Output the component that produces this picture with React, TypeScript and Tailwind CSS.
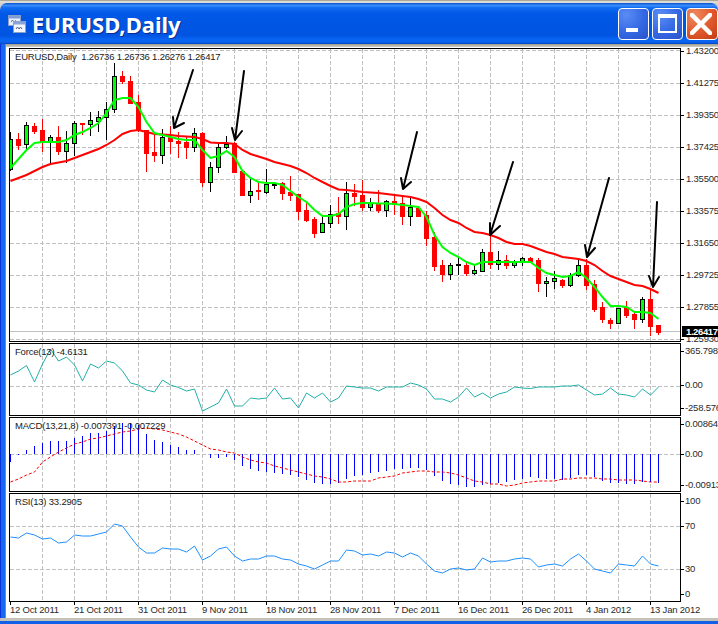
import React from "react";

type C = [number, number, number, number, number];
const candles: C[] = [
  [132,139,169,170,1],[133,139,145,149,0],[122,125,144,148,1],[123,126,131,133,0],[119,130,142,151,0],[135,137,141,163,1],[126,137,151,154,0],[131,143,151,162,1],
  [121,123,143,155,1],[123,123,124,134,0],[112,120,124,135,1],[111,117,121,131,1],[102,109,117,139,1],[63,76,109,112,1],[71,76,81,83,0],[76,81,103,103,0],
  [95,102,130,131,0],[130,130,153,171,0],[133,152,155,161,0],[129,137,155,163,1],[126,137,141,153,0],[132,141,143,157,0],[137,142,147,158,0],[128,133,147,151,1],
  [132,133,182,186,0],[162,167,182,191,1],[142,147,167,172,1],[136,144,147,148,1],[142,143,172,172,0],[170,171,195,195,0],[178,191,195,202,1],[182,190,191,199,0],
  [169,184,192,193,1],[182,184,185,188,1],[182,183,193,199,0],[176,192,195,200,0],[194,194,211,219,0],[202,210,220,221,0],[217,219,233,237,0],[216,223,232,232,1],
  [205,214,223,227,1],[197,213,216,223,0],[182,193,216,229,1],[184,193,196,205,0],[180,195,207,210,0],[198,203,207,210,1],[190,203,210,212,0],[200,201,210,216,1],
  [195,201,204,214,0],[195,203,216,224,0],[198,207,216,225,1],[208,208,216,216,0],[211,215,238,245,0],[232,237,266,270,0],[260,265,274,281,0],[263,265,274,279,1],
  [257,264,265,274,1],[263,265,273,275,0],[265,270,273,274,1],[249,252,271,271,1],[235,252,264,268,0],[251,260,264,269,1],[255,260,265,268,0],[260,261,265,267,1],
  [257,258,261,265,1],[257,258,261,262,0],[258,260,283,291,0],[277,281,283,296,1],[271,278,281,288,1],[279,280,285,287,0],[273,275,285,286,1],[258,265,275,276,1],
  [259,265,285,289,0],[280,284,309,311,0],[302,307,319,322,0],[318,320,323,328,0],[308,308,323,323,1],[301,307,315,317,0],[311,314,319,328,0],[297,299,319,322,1],
  [289,299,326,335,0],[325,325,332,334,0],
];
const redMA = [181,178,175,171,167,164,162.5,161,158,155,152,149,145,140,134,131,130,132,134,134.5,135,136,136.5,137,139,142.5,143,143,144,150,154,156.5,159,162,164,166,169,173,178,182,186,189.5,190,191,192,192.5,193,194,195,196,197,199,202,208,215,220,223,228,232,233,235,238,242,244,244,246,249,252,254,257,258,259,261,265,271,276,279,282,285,286,289,293];
const greenMA = [168,159,150,143,142,142,142,140,135,132,128,123,113,100,98,98,107,122,133,135,137,139,140,140,150,158,156,151,157,171,178,182,183,183,185,191,197,202,210,216,216,214,207,204,203,203,203.5,203.5,204,205,206,207,217,235,247,253,257,262,265,262,262,262,262,262,262,262,268,273,275,277,276,272,278,287,297,306,306,307,312,312,313,319];
const force = [375,371,365.5,382,364,349,361,357,365,381,364,368,361,363,371,383,385,390,392,380,385,387.5,391,389,411,407,403,389,406,406,398,399,398,388,399,398,408,393,398,393,402,398,386,387,388,388,391,387,387,387,383,385,389,399,399,402,397,388,397,393,398,394,392,387,388,388.5,387,387,387,386,386,385,390,395,394,388,394,395,397,389,395,387];
const macdHist = [462,455,450,446,443,441,441,441,438,436,433,433,431,426,423,423,425,434,440,442,445,447,450,450,454,458,458,457,460,466,469,471,472,473,474,475,477,480,483,484,484,483,479,476,475,473,472,471,469,469,468,468,470,476,481,484,485,487,487,485,484,483,482,480,479,477,478,479,479,480,478,475,475,477,481,483,483,484,484,482,482,483];
const macdSig = [482,479,475,472,462,457,452,448,444,442,439,438,436,434,432,431,429,428,429,430,432,434,437,441,445,449,450,452,453,457,460,462,463,466,468,470,472,474,476,477,479,482,482,481,481,481,478,477,476,473,472,471,471,472,472,473,475,478,481,482,484,484,486,485,483,482,481,481,481,479,479,478,478,478,479,479,480,480,480,481,482,482];
const rsi = [537,538,533,535,539,538,543,542,535,536,536,534,532,524,526,537,547,553,553,548,549,549,552,546,560,556,549,547,556,561,559,559,556,556,559,560,564,566,569,565,561,561,550,551,555,554,556,552,553,557,553,556,564,571,573,569,568,570,569,558,562,561,561,559,558,559,567,565,564,566,559,554,561,569,571,573,564,565,566,556,564,566];

const px = (i: number) => 10.5 + 8 * i;
const pts = (a: number[]) => a.map((y, i) => `${px(i)},${y}`).join(" ");
const vGrid = Array.from({ length: 20 }, (_, i) => 42.5 + 32 * i);
const mainH = [50.5, 83.5, 115.5, 147.5, 179.5, 211.5, 243.5, 275.5, 307.5, 339.5];
const arrows = [
  [193,70,174,128,173,117,184,123],
  [244,71,235,140,232,128,242,131],
  [417,132,403,189,401,178,411,182],
  [513,162,490,235,490,223,500,226],
  [609,178,587,257,585,245,595,248],
  [657,202,653,287,649,276,659,277],
];
const dates = ["12 Oct 2011","21 Oct 2011","31 Oct 2011","9 Nov 2011","18 Nov 2011","28 Nov 2011","7 Dec 2011","16 Dec 2011","26 Dec 2011","4 Jan 2012","13 Jan 2012"];
const mainLabels = ["1.43200","1.41275","1.39350","1.37425","1.35500","1.33575","1.31650","1.29725","1.27855","1.25930"];

function Grid({ h, top, bottom }: { h: number[]; top: number; bottom: number }) {
  return (
    <g stroke="#c0c0c0" strokeWidth={1} strokeDasharray="4 2" shapeRendering="crispEdges">
      {vGrid.map((x) => <line key={x} x1={x} x2={x} y1={top} y2={bottom} />)}
      {h.map((y) => <line key={y} x1={10} x2={680} y1={y} y2={y} />)}
    </g>
  );
}

function Tick({ text, className }: { text: string; className: string }) {
  return (
    <div className={`h-[12px] flex items-center whitespace-nowrap ${className}`}>
      <span className="w-[3px] h-px bg-black shrink-0" />
      <span className="ml-[1px]">{text}</span>
    </div>
  );
}

function PaneRow({ height, label, svg, axis }: { height: string; label: React.ReactNode; svg: React.ReactNode; axis: React.ReactNode }) {
  return (
    <div className={`flex ${height}`}>
      <div className="relative w-[672px] shrink-0 border border-black bg-white">
        {svg}
        <div className="absolute left-[5px] top-[2px] whitespace-nowrap leading-[12px] text-[#1a1a1a]">{label}</div>
      </div>
      <div className="flex-1 min-w-0 flex flex-col text-[#2a2a2a]">{axis}</div>
    </div>
  );
}

export default function App() {
  return (
    <div className="relative w-[718px] h-[624px] overflow-hidden bg-[#d4d0c8] flex flex-col text-[9.5px] tracking-[-0.2px] [font-family:'Liberation_Sans',Arial,sans-serif]">
      <div className="h-[3px] shrink-0 border-t border-[#aca899] bg-[#dcdcd6]" />
      {/* title bar */}
      <div className="h-[41px] shrink-0 flex items-center rounded-t-[7px] pl-[8px] bg-[linear-gradient(180deg,#0a4fd0_0%,#3a8cf8_6%,#0f6af0_12%,#0058e6_26%,#0054e0_78%,#0a66f4_90%,#0a62ee_96%,#0042b8_100%)]">
        <svg viewBox="0 0 18 18" className="w-[18px] h-[18px] shrink-0">
          <rect x="0.5" y="0.5" width="12" height="10" fill="#e8eef8" stroke="#8aa0c8" />
          <rect x="1" y="1" width="11" height="2.5" fill="#7f9cd8" />
          <path d="M3 7l1.5-2 1.5 2 1.5-1.5L9 7" fill="none" stroke="#6070a0" strokeWidth="1" />
          <rect x="5.5" y="6.5" width="12" height="11" fill="#f2f5fb" stroke="#8aa0c8" />
          <rect x="6" y="7" width="11" height="2.5" fill="#88a4dc" />
          <path d="M8 14l1.5-2 1.5 2 1.5-2 1.5 2" fill="none" stroke="#50608c" strokeWidth="1" />
        </svg>
        <div className="ml-[6px] text-[22px] leading-none font-bold tracking-normal text-white whitespace-nowrap [font-family:'Noto_Sans',sans-serif] [text-shadow:1px_1px_0_#0a2a90]">
          EURUSD,Daily
        </div>
        <div className="ml-auto flex gap-[3px] shrink-0">
          <div className="w-[31px] h-[32px] flex items-end justify-center rounded-[4px] border border-white bg-[radial-gradient(circle_at_25%_20%,#5a8cf4,#3468e4_55%,#2a52c8)]">
            <div className="w-[12px] h-[4px] mb-[7px] mr-[3px] bg-white" />
          </div>
          <div className="w-[31px] h-[32px] flex items-center justify-center rounded-[4px] border border-white bg-[radial-gradient(circle_at_25%_20%,#5a8cf4,#3468e4_55%,#2a52c8)]">
            <div className="w-[19px] h-[19px] border-2 border-t-[4px] border-white" />
          </div>
          <div className="w-[32px] h-[32px] flex items-center rounded-[4px] border border-white bg-[radial-gradient(circle_at_25%_20%,#f08a60,#e0582c_55%,#c03c12)]">
            <svg viewBox="0 0 22 22" className="w-[22px] h-[22px] ml-[3px]">
              <path d="M2 2L20 20M20 2L2 20" stroke="#fff" strokeWidth="4.5" strokeLinecap="square" fill="none" />
            </svg>
          </div>
        </div>
      </div>
      {/* body */}
      <div className="flex-1 flex min-h-0">
        <div className="w-[6px] shrink-0 bg-[linear-gradient(90deg,#0831d9_0%,#0831d9_16%,#1668ee_17%,#1668ee_82%,#808890_83%)]" />
        <div className="flex-1 min-w-0 flex flex-col">
          <div className="h-[3px] shrink-0 bg-[linear-gradient(180deg,#9c9a8c,#d4d0c8)]" />
          <div className="flex-1 min-h-0 bg-white pt-[1px] pl-[3px] flex flex-col gap-[1px]">
            <PaneRow
              height="h-[294px]"
              label={<span>EURUSD,Daily&nbsp; 1.26736 1.26736 1.26276 1.26417</span>}
              svg={
                <svg viewBox="10 49 670 292" className="block w-full h-full">
                  <Grid h={mainH} top={49} bottom={341} />
                  <line x1={10} x2={680} y1={331.5} y2={331.5} stroke="#c0c0c0" shapeRendering="crispEdges" />
                  <g shapeRendering="crispEdges">
                    {candles.map(([hi, top, bot, lo, up], i) => {
                      const x = px(i);
                      const col = up ? "#000" : "#ff0000";
                      return (
                        <g key={i}>
                          <line x1={x} x2={x} y1={hi} y2={lo + 1} stroke={col} />
                          <rect x={x - 2} y={top + 0.5} width={4} height={Math.max(bot - top, 0.5)} fill={up ? "#00ff00" : "#ff0000"} stroke={col} />
                        </g>
                      );
                    })}
                  </g>
                  <polyline points={pts(redMA)} fill="none" stroke="#ff0000" strokeWidth={2} />
                  <polyline points={pts(greenMA)} fill="none" stroke="#00ff00" strokeWidth={2} />
                  <g stroke="#000" strokeWidth={2} fill="none" strokeLinecap="round" strokeLinejoin="round">
                    {arrows.map((a, i) => (
                      <path key={i} d={`M${a[0]} ${a[1]}L${a[2]} ${a[3]}M${a[4]} ${a[5]}L${a[2]} ${a[3]}L${a[6]} ${a[7]}`} />
                    ))}
                  </g>
                </svg>
              }
              axis={
                <div className="relative flex flex-col -mt-[13px]">
                  {mainLabels.map((t) => (
                    <div key={t} className="h-[32px] flex items-center whitespace-nowrap">
                      <span className="w-[3px] h-px bg-black shrink-0" />
                      <span className="ml-[2px]">{t}</span>
                    </div>
                  ))}
                  <div className="absolute left-[1px] top-[291px] w-[40px] h-[11px] pl-[4px] bg-black text-white leading-[11px] font-bold tracking-[-0.4px]">1.26417</div>
                </div>
              }
            />
            <PaneRow
              height="h-[73px]"
              label={<span>Force(13) -4.6131</span>}
              svg={
                <svg viewBox="10 344 670 71" className="block w-full h-full">
                  <Grid h={[386.5]} top={344} bottom={415} />
                  <polyline points={pts(force)} fill="none" stroke="#20b2aa" strokeWidth={1} />
                </svg>
              }
              axis={
                <>
                  <Tick text="365.798" className="mt-[2px]" />
                  <Tick text="0.00" className="mt-[22px]" />
                  <Tick text="-258.576" className="mt-[11px]" />
                </>
              }
            />
            <PaneRow
              height="h-[75px]"
              label={<span>MACD(13,21,8) -0.007391 -0.007229</span>}
              svg={
                <svg viewBox="10 418 670 73" className="block w-full h-full">
                  <Grid h={[454.5]} top={418} bottom={491} />
                  <g stroke="#0000ff" shapeRendering="crispEdges">
                    {macdHist.map((y, i) => <line key={i} x1={px(i)} x2={px(i)} y1={454} y2={y} />)}
                  </g>
                  <polyline points={pts(macdSig)} fill="none" stroke="#ff0000" strokeWidth={1} strokeDasharray="3 2" />
                </svg>
              }
              axis={
                <>
                  <Tick text="0.008641" className="mt-[1px]" />
                  <Tick text="0.00" className="mt-[18px]" />
                  <Tick text="-0.00913" className="mt-[19px]" />
                </>
              }
            />
            <PaneRow
              height="h-[109px]"
              label={<span>RSI(13) 33.2905</span>}
              svg={
                <svg viewBox="10 494 670 107" className="block w-full h-full">
                  <Grid h={[526.5, 569.5]} top={494} bottom={601} />
                  <polyline points={pts(rsi)} fill="none" stroke="#1e90ff" strokeWidth={1} />
                </svg>
              }
              axis={
                <>
                  <Tick text="100" className="mt-[2px]" />
                  <Tick text="70" className="mt-[13px]" />
                  <Tick text="30" className="mt-[31px]" />
                  <Tick text="0" className="mt-[13px]" />
                </>
              }
            />
            {/* date axis */}
            <div className="flex pl-[1px] -mt-[1px] text-[#2a2a2a]">
              {dates.map((d) => (
                <div key={d} className="w-[64px] shrink-0 flex flex-col">
                  <span className="w-px h-[3px] ml-[0px] bg-black" />
                  <span className="whitespace-nowrap leading-[12px] mt-[-1px]">{d}</span>
                </div>
              ))}
            </div>
          </div>
        </div>
      </div>
      {/* bottom frame */}
      <div className="h-[3px] shrink-0 bg-[#c4c2b8]" />
      <div className="h-[3px] shrink-0 bg-[#1060e8]" />
    </div>
  );
}
